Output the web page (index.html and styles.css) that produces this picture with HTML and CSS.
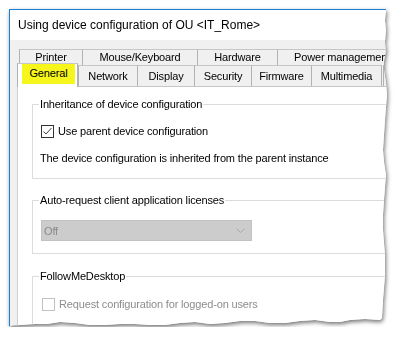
FILE: index.html
```html
<!DOCTYPE html>
<html lang="en">
<head>
  <meta charset="UTF-8" />
  <title>Using device configuration of OU</title>
  <link rel="stylesheet" href="styles.css">
</head>
<body>

  <!-- torn screenshot with shadow -->
  <div class="frame">
    <div class="window">

      <!-- title bar -->
      <div class="titlebar">Using device configuration of OU &lt;IT_Rome&gt;</div>

      <div class="dialog-body">

        <!-- back row of tabs -->
        <div class="tab-row back">
          <div class="tab printer">Printer</div>
          <div class="tab mouse">Mouse/Keyboard</div>
          <div class="tab hardware">Hardware</div>
          <div class="tab power">Power managemen</div>
        </div>

        <!-- front row of tabs -->
        <div class="tab-row front">
          <div class="tab general selected"><span class="marker">General</span></div>
          <div class="tab network">Network</div>
          <div class="tab display">Display</div>
          <div class="tab security">Security</div>
          <div class="tab firmware">Firmware</div>
          <div class="tab multimedia">Multimedia</div>
          <div class="tab more"></div>
        </div>

        <!-- tab page: General -->
        <div class="tab-page">
          <fieldset class="group first">
            <legend>Inheritance of device configuration</legend>
            <label class="check-row">
              <span class="checkbox">
                <svg width="11" height="11" viewBox="0 0 11 11"><polyline points="1.5,5.5 4,8 9.5,2" fill="none" stroke="#444" stroke-width="1"/></svg>
              </span>
              Use parent device configuration
            </label>
            <p class="info">The device configuration is inherited from the parent instance</p>
          </fieldset>

          <fieldset class="group second">
            <legend>Auto-request client application licenses</legend>
            <div class="combo">
              <span>Off</span>
              <svg width="9" height="5" viewBox="0 0 9 5"><polyline points="0.5,0.5 4.5,4.5 8.5,0.5" fill="none" stroke="#a8a8a8" stroke-width="1"/></svg>
            </div>
          </fieldset>

          <fieldset class="group third">
            <legend>FollowMeDesktop</legend>
            <label class="check-row disabled">
              <span class="checkbox"></span>
              Request configuration for logged-on users
            </label>
          </fieldset>
        </div>

      </div>
    </div>
  </div>

</body>
</html>
```

FILE: styles.css
```css
/* page basics */
html, body {
  margin: 0;
  padding: 0;
  background: #fff;
  font-family: "Liberation Sans", Arial, sans-serif;
  font-size: 11px;
  letter-spacing: -0.15px;
  color: #000;
}

* {
  box-sizing: border-box;
}

/* wrapper that throws the shadow of the torn shape */
.frame {
  width: fit-content;
  padding: 9px 0 0 9px;
  filter: drop-shadow(1px 2px 2px rgba(0, 0, 0, 0.55));
}

/* dialog window, torn on the right and bottom */
.window {
  width: 379px;
  height: 318px;
  overflow: hidden;
  background: #f0f0f0;
  border-top: 1px solid #1c7fd6;
  border-left: 1px solid #1c7fd6;
  clip-path: polygon(0 0, 377px 0, 376px 12px, 377px 21px, 376px 33px, 377px 41px, 375px 52px, 375px 61px,
    377px 74px, 378px 86px, 377px 98px, 376px 111px, 375px 126px, 374px 141px, 375px 153px, 377px 166px,
    376px 178px, 375px 191px, 374px 206px, 374px 221px, 375px 234px, 376px 246px, 376px 266px,
    375px 279px, 374px 291px, 373px 309px, 371px 311px, 356px 310px, 341px 311px, 331px 313px, 321px 313px,
    306px 311px, 291px 312px, 276px 314px, 261px 314px, 246px 312px, 231px 312px, 216px 314px, 201px 315px,
    186px 313px, 171px 314px, 156px 316px, 141px 316px, 126px 315px, 111px 315px, 96px 316px, 81px 316px,
    66px 314px, 51px 313px, 38px 315px, 26px 315px, 11px 316px, 0 317px);
}

/* title bar */
.titlebar {
  height: 30px;
  line-height: 30px;
  padding-left: 8px;
  background: #fff;
  font-size: 12px;
  letter-spacing: 0;
  white-space: nowrap;
}

/* grey dialog area */
.dialog-body {
  width: 420px;
  padding: 9px 0 0 7px;
}

/* tab rows */
.tab-row {
  display: flex;
  align-items: flex-end;
}

.tab-row.back {
  height: 16px;
  margin-left: 2px;
}

.tab-row.front {
  height: 21px;
}

.tab {
  flex: none;
  height: 100%;
  border-top: 1px solid #c6c6c6;
  border-left: 1px solid #b2b2b2;
  background: #f0f0f0;
  text-align: center;
  white-space: nowrap;
  overflow: hidden;
}

.back .tab {
  line-height: 15px;
}

.front .tab {
  line-height: 21px;
}

.tab.multimedia {
  border-right: 1px solid #b2b2b2;
}

/* last back tab is cut by the torn edge */
.tab.power {
  padding-left: 16px;
  text-align: left;
}

.tab.more {
  margin-left: 1px;
}

/* tab widths */
.tab.printer { width: 63px; }
.tab.mouse { width: 115px; }
.tab.hardware { width: 80px; }
.tab.power { width: 130px; }
.tab.general { width: 61px; }
.tab.network { width: 59px; }
.tab.display { width: 57px; }
.tab.security { width: 57px; }
.tab.firmware { width: 60px; }
.tab.multimedia { width: 71px; }
.tab.more { width: 60px; }

/* selected tab sits in front and joins the page */
.tab.selected {
  height: 24px;
  margin-bottom: -1px;
  padding-left: 4px;
  background: #fff;
  border-right: 1px solid #b2b2b2;
  position: relative;
  z-index: 1;
  text-align: left;
}

/* yellow highlighter over the tab caption */
.marker {
  display: block;
  width: 53px;
  height: 21px;
  margin-top: -1px;
  line-height: 21px;
  background: #f6f61c;
  text-align: center;
}

/* white tab page */
.tab-page {
  height: 260px;
  background: #fff;
  border-top: 1px solid #c6c6c6;
  border-left: 1px solid #cfcfcf;
  padding-left: 14px;
}

/* group boxes */
.group {
  margin: 0;
  width: 380px;
  padding: 0 0 0 6px;
  border: 1px solid #dcdcdc;
}

.group legend {
  padding: 0 1px;
  line-height: 13px;
}

.group.first {
  margin-top: 11px;
  padding-bottom: 13px;
}

.group.second {
  margin-top: 15px;
  padding-bottom: 12px;
}

.group.third {
  margin-top: 16px;
  height: 60px;
}

/* checkbox rows */
.check-row {
  display: flex;
  align-items: center;
  height: 14px;
  margin-top: 13px;
  margin-left: 2px;
}

.checkbox {
  flex: none;
  display: flex;
  align-items: center;
  justify-content: center;
  width: 13px;
  height: 13px;
  margin-right: 4px;
  border: 1px solid #333;
  background: #fff;
}

.check-row.disabled {
  margin-top: 14px;
  margin-left: 3px;
  color: #8d8d8d;
}

.check-row.disabled .checkbox {
  border-color: #c2c2c2;
}

/* plain info line */
.info {
  margin: 13px 0 0 1px;
  line-height: 14px;
}

/* disabled combo box */
.combo {
  display: flex;
  align-items: center;
  justify-content: space-between;
  width: 211px;
  height: 21px;
  margin-top: 13px;
  margin-left: 2px;
  padding: 0 6px 0 2px;
  background: #cccccc;
  border: 1px solid #c2c2c2;
  color: #8a8a8a;
}
```
